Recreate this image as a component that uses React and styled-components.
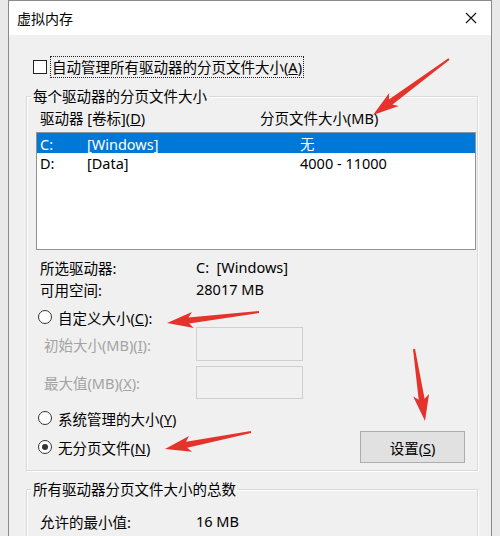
import React from 'react'
import styled, { createGlobalStyle } from 'styled-components'

const GlobalStyle = createGlobalStyle`
  html, body {
    margin: 0;
    padding: 0;
    background: #e9e9e9;
  }
  body {
    font-family: "Noto Sans", "Noto Sans CJK SC", sans-serif;
    font-size: 14.5px;
    color: #000;
  }
`

const Page = styled.div`
  position: relative;
  width: 500px;
  height: 536px;
  overflow: hidden;
  padding-left: 8px;
  box-sizing: border-box;
  background: #e9e9e9;
`

const Window = styled.div`
  width: 484px;
  height: 560px;
  box-sizing: border-box;
  border-left: 1px solid #8a8a8a;
  border-right: 1px solid #8a8a8a;
  border-top: 1px solid #8a8a8a;
  background: #f0f0f0;
  display: flex;
  flex-direction: column;
`

const TitleBar = styled.div`
  height: 34px;
  background: #fff;
  display: flex;
  align-items: center;
  justify-content: space-between;
  padding: 0 14px 0 8px;
  font-family: "Noto Sans CJK SC", sans-serif;
  font-size: 14px;
`

const Body = styled.div`
  padding: 0 13px 0 17px;
  display: flex;
  flex-direction: column;
`

const CheckRow = styled.div`
  margin-top: 21px;
  height: 22px;
  display: flex;
  align-items: center;
  padding-left: 7px;
`

const CheckBox = styled.span`
  width: 14px;
  height: 14px;
  border: 1px solid #222;
  background: #fff;
  box-sizing: border-box;
  margin-right: 3px;
`

const FocusLabel = styled.span`
  border: 1px dotted #222;
  height: 22px;
  line-height: 21px;
  box-sizing: border-box;
  padding: 0 1px;
`

const Group = styled.fieldset`
  margin: ${p => p.$top}px 0 0 0;
  padding: 0 1px ${p => p.$bottom}px 9px;
  border: 1px solid #d9d9d9;
  box-shadow: inset 1px 1px 0 #fff, 1px 1px 0 #fff;
  min-width: 0;
  display: flex;
  flex-direction: column;
`

const Legend = styled.legend`
  padding: 0 2px;
  margin-left: -5px;
  line-height: 16px;
  height: 16px;
`

const HeaderRow = styled.div`
  margin-top: 3px;
  height: 20px;
  display: grid;
  grid-template-columns: 220px 1fr;
  align-items: center;
  padding-left: 4px;
`

const ListBox = styled.div`
  margin-top: 5px;
  height: 118px;
  border: 1px solid #8f9499;
  background: #fff;
  box-sizing: border-box;
`

const ListRow = styled.div`
  height: 20px;
  display: grid;
  grid-template-columns: 47px 213px 1fr;
  align-items: center;
  padding-left: 3px;
  background: ${p => (p.$selected ? '#0078d7' : 'transparent')};
  color: ${p => (p.$selected ? '#fff' : '#000')};
`

const InfoRow = styled.div`
  margin-top: ${p => p.$top || 0}px;
  height: 22px;
  display: grid;
  grid-template-columns: 156px 1fr;
  align-items: center;
  padding-left: 4px;
  white-space: pre;
`

const RadioRow = styled.label`
  margin-top: ${p => p.$top || 0}px;
  height: 20px;
  display: flex;
  align-items: center;
  padding-left: 2px;
`

const Radio = styled.span`
  width: 14px;
  height: 14px;
  border-radius: 50%;
  border: 1px solid #333;
  background: #fff;
  box-sizing: border-box;
  margin-right: 6px;
  display: flex;
  align-items: center;
  justify-content: center;
  &::after {
    content: '';
    width: 6px;
    height: 6px;
    border-radius: 50%;
    background: ${p => (p.$checked ? '#333' : 'transparent')};
  }
`

const SizeRow = styled.div`
  margin-top: ${p => p.$top || 0}px;
  height: ${p => p.$h}px;
  display: grid;
  grid-template-columns: 152px 107px;
  align-items: center;
  padding-left: 8px;
  color: #a3a3a3;
`

const SizeInput = styled.div`
  height: 100%;
  border: 1px solid #cfcfcf;
  background: #f0f0f0;
  box-sizing: border-box;
`

const BottomRow = styled.div`
  margin-top: 3px;
  height: 32px;
  display: flex;
  align-items: center;
  justify-content: space-between;
`

const Button = styled.button`
  width: 105px;
  height: 32px;
  margin-right: 11px;
  border: 1px solid #adadad;
  background: #e1e1e1;
  font: inherit;
  color: #000;
  padding: 0;
`

const Overlay = styled.svg`
  position: absolute;
  left: 0;
  top: 0;
  pointer-events: none;
`

// tapered annotation arrow: thin tail, thicker neck, swept-back head
function arrowPoints([x1, y1], [x2, y2], headLen = 22, headW = 16, tailW = 2, neckW = 6) {
  const dx = x2 - x1
  const dy = y2 - y1
  const len = Math.hypot(dx, dy)
  const ux = dx / len
  const uy = dy / len
  const nx = -uy
  const ny = ux
  const kx = x2 - ux * headLen
  const ky = y2 - uy * headLen
  const pts = [
    [x1 + (nx * tailW) / 2, y1 + (ny * tailW) / 2],
    [kx + (nx * neckW) / 2, ky + (ny * neckW) / 2],
    [kx - ux * 4 + (nx * headW) / 2, ky - uy * 4 + (ny * headW) / 2],
    [x2, y2],
    [kx - ux * 4 - (nx * headW) / 2, ky - uy * 4 - (ny * headW) / 2],
    [kx - (nx * neckW) / 2, ky - (ny * neckW) / 2],
    [x1 - (nx * tailW) / 2, y1 - (ny * tailW) / 2],
  ]
  return pts.map(p => p.map(v => v.toFixed(1)).join(',')).join(' ')
}

const arrows = [
  [[449, 59], [373, 115]],
  [[259, 312], [167, 323]],
  [[414, 349], [425, 421]],
  [[251, 432], [165, 449]],
]

function CloseIcon() {
  return (
    <svg width="12" height="12" viewBox="0 0 12 12">
      <path d="M1 1 L11 11 M11 1 L1 11" stroke="#111" strokeWidth="1.1" fill="none" />
    </svg>
  )
}

export default function App() {
  return (
    <>
      <GlobalStyle />
      <Page>
        <Window>
          <TitleBar>
            <span>虚拟内存</span>
            <CloseIcon />
          </TitleBar>
          <Body>
            <CheckRow>
              <CheckBox />
              <FocusLabel>自动管理所有驱动器的分页文件大小(<u>A</u>)</FocusLabel>
            </CheckRow>

            <Group $top={10} $bottom={7}>
              <Legend>每个驱动器的分页文件大小</Legend>
              <HeaderRow>
                <span>驱动器 [卷标](<u>D</u>)</span>
                <span>分页文件大小(MB)</span>
              </HeaderRow>
              <ListBox>
                <ListRow $selected>
                  <span>C:</span>
                  <span>[Windows]</span>
                  <span>无</span>
                </ListRow>
                <ListRow>
                  <span>D:</span>
                  <span>[Data]</span>
                  <span>4000 - 11000</span>
                </ListRow>
              </ListBox>
              <InfoRow $top={6}>
                <span>所选驱动器:</span>
                <span>C:  [Windows]</span>
              </InfoRow>
              <InfoRow>
                <span>可用空间:</span>
                <span>28017 MB</span>
              </InfoRow>
              <RadioRow $top={7}>
                <Radio />
                <span>自定义大小(<u>C</u>):</span>
              </RadioRow>
              <SizeRow $h={34}>
                <span>初始大小(MB)(<u>I</u>):</span>
                <SizeInput />
              </SizeRow>
              <SizeRow $h={33} $top={5}>
                <span>最大值(MB)(<u>X</u>):</span>
                <SizeInput />
              </SizeRow>
              <RadioRow $top={9}>
                <Radio />
                <span>系统管理的大小(<u>Y</u>)</span>
              </RadioRow>
              <BottomRow>
                <RadioRow>
                  <Radio $checked />
                  <span>无分页文件(<u>N</u>)</span>
                </RadioRow>
                <Button>设置(<u>S</u>)</Button>
              </BottomRow>
            </Group>

            <Group $top={10} $bottom={20}>
              <Legend>所有驱动器分页文件大小的总数</Legend>
              <InfoRow $top={13}>
                <span>允许的最小值:</span>
                <span>16 MB</span>
              </InfoRow>
            </Group>
          </Body>
        </Window>
        <Overlay width="500" height="536" viewBox="0 0 500 536">
          {arrows.map(([a, b], i) => (
            <polygon key={i} points={arrowPoints(a, b)} fill="#e5322b" />
          ))}
        </Overlay>
      </Page>
    </>
  )
}
